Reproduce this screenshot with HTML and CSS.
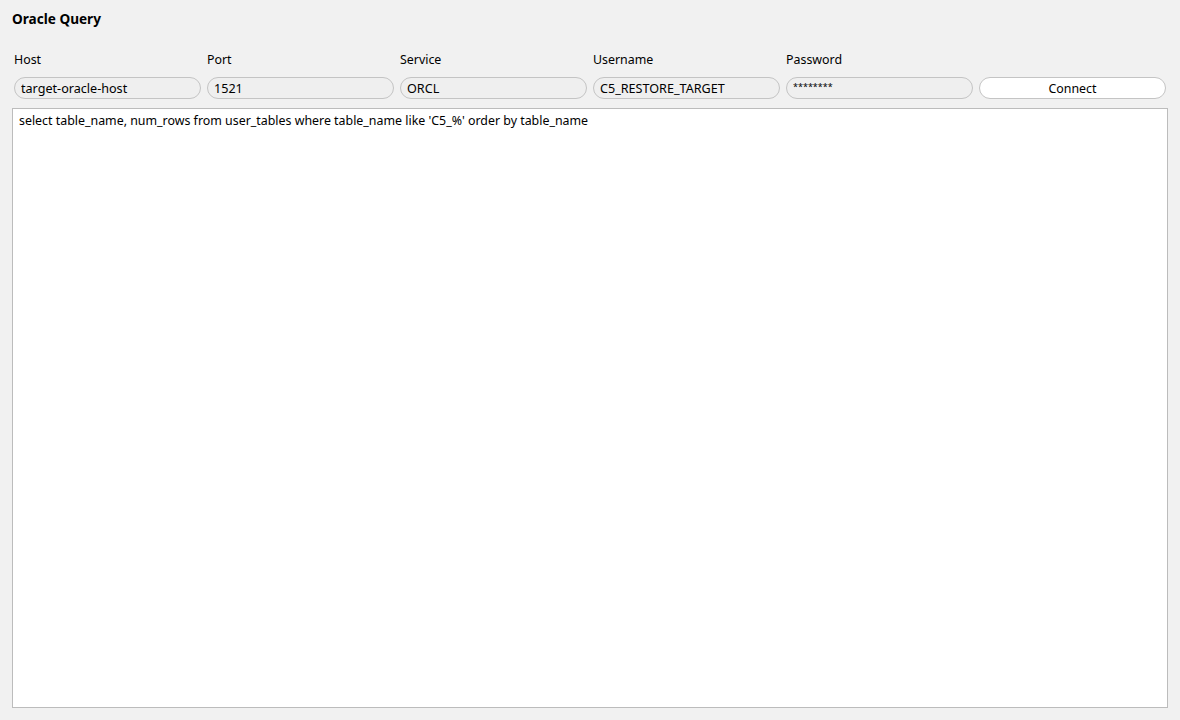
FILE: index.html
```html
<!DOCTYPE html>
<html lang="en">
  <head>
    <meta charset="UTF-8" />
    <title>Oracle Query</title>
    <link rel="stylesheet" href="styles.css">
  </head>
  <body>
    <div class="panel">
      <h1 class="panel-title">Oracle Query</h1>

      <form class="conn-grid">
        <label class="field-label" for="host">Host</label>
        <label class="field-label" for="port">Port</label>
        <label class="field-label" for="service">Service</label>
        <label class="field-label" for="username">Username</label>
        <label class="field-label" for="password">Password</label>
        <span></span>

        <input class="field" id="host" type="text" value="target-oracle-host" />
        <input class="field" id="port" type="text" value="1521" />
        <input class="field" id="service" type="text" value="ORCL" />
        <input class="field" id="username" type="text" value="C5_RESTORE_TARGET" />
        <input class="field field-password" id="password" type="text" value="********" />
        <button class="connect-btn" type="button">Connect</button>
      </form>

      <textarea class="query-box" spellcheck="false">select table_name, num_rows from user_tables where table_name like 'C5_%' order by table_name</textarea>
    </div>
  </body>
</html>
```

FILE: styles.css
```css
* {
  margin: 0;
  padding: 0;
  box-sizing: border-box;
}

html,
body {
  height: 100%;
}

body {
  background-color: #f1f1f1;
  color: #000000;
  font-family: "Noto Sans", "DejaVu Sans", sans-serif;
  font-size: 12.4px;
}

.panel {
  height: 100%;
  display: flex;
  flex-direction: column;
  padding: 8px 12px 12px;
}

.panel-title {
  font-size: 13.6px;
  font-weight: 700;
  line-height: 22px;
}

.conn-grid {
  display: grid;
  grid-template-columns: repeat(6, 187px);
  column-gap: 6px;
  row-gap: 8px;
  padding: 0 2px;
  margin-top: 21px;
}

.field-label {
  line-height: 18px;
  font-size: 12.4px;
}

.field,
.connect-btn {
  height: 22px;
  border: 1px solid #c4c4c4;
  border-radius: 11px;
  font-family: inherit;
  font-size: 12.6px;
  color: #000000;
}

.field {
  background-color: #efefef;
  padding: 0 6px;
  outline: none;
}

.field-password {
  font-size: 9px;
  padding-bottom: 3px;
}

.connect-btn {
  background-color: #ffffff;
  font-size: 12.4px;
  cursor: pointer;
}

.query-box {
  flex: 1;
  margin-top: 9px;
  border: 1px solid #bcbcbc;
  background-color: #ffffff;
  padding: 3px 6px;
  font-family: inherit;
  font-size: 12.4px;
  line-height: 17px;
  resize: none;
  outline: none;
}
```
